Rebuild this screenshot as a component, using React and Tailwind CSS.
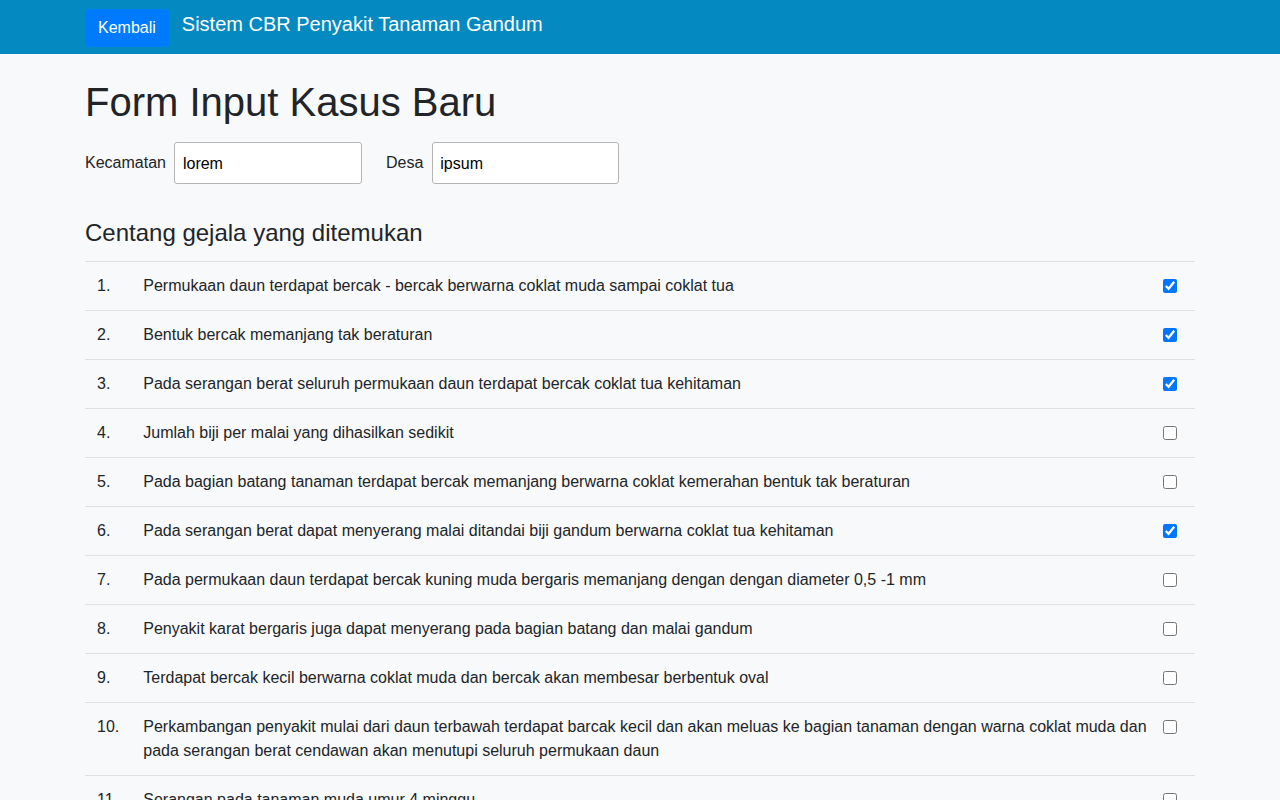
import React from "react";

const gejala = [
  { text: "Permukaan daun terdapat bercak - bercak berwarna coklat muda sampai coklat tua", checked: true },
  { text: "Bentuk bercak memanjang tak beraturan", checked: true },
  { text: "Pada serangan berat seluruh permukaan daun terdapat bercak coklat tua kehitaman", checked: true },
  { text: "Jumlah biji per malai yang dihasilkan sedikit", checked: false },
  { text: "Pada bagian batang tanaman terdapat bercak memanjang berwarna coklat kemerahan bentuk tak beraturan", checked: false },
  { text: "Pada serangan berat dapat menyerang malai ditandai biji gandum berwarna coklat tua kehitaman", checked: true },
  { text: "Pada permukaan daun terdapat bercak kuning muda bergaris memanjang dengan dengan diameter 0,5 -1 mm", checked: false },
  { text: "Penyakit karat bergaris juga dapat menyerang pada bagian batang dan malai gandum", checked: false },
  { text: "Terdapat bercak kecil berwarna coklat muda dan bercak akan membesar berbentuk oval", checked: false },
  { text: "Perkambangan penyakit mulai dari daun terbawah terdapat barcak kecil dan akan meluas ke bagian tanaman dengan warna coklat muda dan pada serangan berat cendawan akan menutupi seluruh permukaan daun", checked: false },
  { text: "Serangan pada tanaman muda umur 4 minggu", checked: false },
  { text: "Daun menguning dan layu", checked: false },
  { text: "Tanaman menjadi kerdil", checked: false },
];

export default function App() {
  return (
    <div className="min-h-screen bg-[#f8f9fa] text-[#212529] font-['Liberation_Sans',Arial,sans-serif] text-base leading-6">
      <nav className="bg-[#0589c1] h-[54px]">
        <div className="mx-auto w-[1110px] h-full flex items-center">
          <button className="bg-[#007bff] text-white rounded px-[13px] h-[38px] mt-[1px]">
            Kembali
          </button>
          <span className="ml-[13px] text-white text-xl mb-[6px]">
            Sistem CBR Penyakit Tanaman Gandum
          </span>
        </div>
      </nav>

      <div className="mx-auto w-[1110px]">
        <h1 className="text-[40px] leading-[1.2] mt-6 mb-4">Form Input Kasus Baru</h1>

        <form>
          <div className="flex items-center">
            <label className="mr-2">Kecamatan</label>
            <input
              type="text"
              defaultValue="lorem"
              className="w-[188px] h-[42px] px-[8px] pt-[1px] bg-white border border-[#b5b5b5] rounded-[3px] text-black"
            />
            <label className="ml-6 mr-[9px]">Desa</label>
            <input
              type="text"
              defaultValue="ipsum"
              className="w-[187px] h-[42px] px-[7px] pt-[1px] bg-white border border-[#b5b5b5] rounded-[3px] text-black"
            />
          </div>

          <h4 className="text-2xl leading-[1.2] mt-[35px] mb-[13px]">Centang gejala yang ditemukan</h4>

          <table className="w-full border-collapse">
            <tbody>
              {gejala.map((g, i) => (
                <tr key={i} className="border-t border-[#dee2e6] align-top">
                  <td className="w-[46px] p-3">{i + 1}.</td>
                  <td className="py-3 pl-3 pr-0">{g.text}</td>
                  <td className="w-[47px] py-3 pl-[15px] pr-0">
                    <input
                      type="checkbox"
                      defaultChecked={g.checked}
                      className="w-[14px] h-[14px] mt-[5px] block"
                    />
                  </td>
                </tr>
              ))}
            </tbody>
          </table>
        </form>
      </div>
    </div>
  );
}
